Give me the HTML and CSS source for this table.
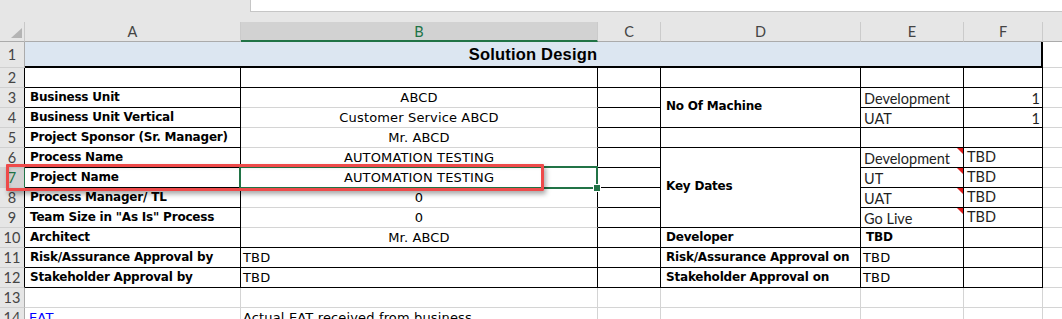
FILE: index.html
```html
<!DOCTYPE html>
<html lang="en">
<head>
<meta charset="utf-8">
<title>Solution Design</title>
<link rel="stylesheet" href="styles.css">
</head>
<body>
<div class="sheet">
  <div class="topbar"><div class="formula"></div></div>
  <table class="grid">
    <colgroup>
      <col class="c-rh"><col class="c-a"><col class="c-b"><col class="c-c"><col class="c-d"><col class="c-e"><col class="c-f"><col class="c-g">
    </colgroup>
    <thead>
      <tr>
        <th class="corner"><span class="tri"></span></th>
        <th class="col">A</th>
        <th class="col on">B</th>
        <th class="col">C</th>
        <th class="col">D</th>
        <th class="col">E</th>
        <th class="col">F</th>
        <th class="col"></th>
      </tr>
    </thead>
    <tbody>
      <tr class="r-title">
        <th class="rh">1</th>
        <td colspan="6" class="title">Solution Design</td>
        <td></td>
      </tr>
      <tr>
        <th class="rh br">2</th>
        <td class="bk"></td><td class="bk"></td><td class="bk"></td><td class="bk"></td><td class="bk"></td><td class="bk"></td><td></td>
      </tr>
      <tr>
        <th class="rh br">3</th>
        <td class="bk lbl">Business Unit</td>
        <td class="br mid">ABCD</td>
        <td class="bk"></td>
        <td class="bk lbl vm" rowspan="2">No Of Machine</td>
        <td class="bk cal">Development</td>
        <td class="bk cal num">1</td>
        <td></td>
      </tr>
      <tr>
        <th class="rh br">4</th>
        <td class="bk lbl">Business Unit Vertical</td>
        <td class="br mid">Customer Service ABCD</td>
        <td class="bk"></td>
        <td class="bk cal">UAT</td>
        <td class="bk cal num">1</td>
        <td></td>
      </tr>
      <tr>
        <th class="rh br">5</th>
        <td class="bk lbl">Project Sponsor (Sr. Manager)</td>
        <td class="br mid">Mr. ABCD</td>
        <td class="bk"></td>
        <td class="bk"></td>
        <td class="bk"></td>
        <td class="bk"></td>
        <td></td>
      </tr>
      <tr>
        <th class="rh br">6</th>
        <td class="bk lbl">Process Name</td>
        <td class="br mid">AUTOMATION TESTING</td>
        <td class="bk"></td>
        <td class="bk lbl vm" rowspan="4">Key Dates</td>
        <td class="bk cal note">Development</td>
        <td class="bk cal top">TBD</td>
        <td></td>
      </tr>
      <tr>
        <th class="rh on">7</th>
        <td class="bk lbl">Project Name</td>
        <td class="br mid cur">AUTOMATION TESTING<span class="cur-box"><span class="cur-handle"></span></span></td>
        <td class="bk"></td>
        <td class="bk cal note">UT</td>
        <td class="bk cal top">TBD</td>
        <td></td>
      </tr>
      <tr>
        <th class="rh br">8</th>
        <td class="bk lbl">Process Manager/ TL</td>
        <td class="br mid">0</td>
        <td class="bk"></td>
        <td class="bk cal note">UAT</td>
        <td class="bk cal top">TBD</td>
        <td></td>
      </tr>
      <tr>
        <th class="rh br">9</th>
        <td class="bk lbl">Team Size in "As Is" Process</td>
        <td class="br mid">0</td>
        <td class="bk"></td>
        <td class="bk cal note">Go Live</td>
        <td class="bk cal top">TBD</td>
        <td></td>
      </tr>
      <tr>
        <th class="rh br">10</th>
        <td class="bk lbl">Architect</td>
        <td class="bk mid">Mr. ABCD</td>
        <td class="bk"></td>
        <td class="bk lbl">Developer</td>
        <td class="bk lbl">TBD</td>
        <td class="bk"></td>
        <td></td>
      </tr>
      <tr>
        <th class="rh br">11</th>
        <td class="bk lbl">Risk/Assurance Approval by</td>
        <td class="bk">TBD</td>
        <td class="bk"></td>
        <td class="bk lbl">Risk/Assurance Approval on</td>
        <td class="bk">TBD</td>
        <td class="bk"></td>
        <td></td>
      </tr>
      <tr>
        <th class="rh br">12</th>
        <td class="bk lbl">Stakeholder Approval by</td>
        <td class="bk">TBD</td>
        <td class="bk"></td>
        <td class="bk lbl">Stakeholder Approval on</td>
        <td class="bk">TBD</td>
        <td class="bk"></td>
        <td></td>
      </tr>
      <tr>
        <th class="rh">13</th>
        <td></td><td></td><td></td><td></td><td></td><td></td><td></td>
      </tr>
      <tr>
        <th class="rh">14</th>
        <td class="link">EAT</td>
        <td>Actual EAT received from business</td>
        <td></td><td></td><td></td><td></td><td></td>
      </tr>
    </tbody>
  </table>
  <div class="callout"></div>
</div>
</body>
</html>
```

FILE: styles.css
```css
* {
  box-sizing: border-box;
}

html,
body {
  margin: 0;
  padding: 0;
}

body {
  width: 1062px;
  height: 319px;
  overflow: hidden;
  background: #ffffff;
  font-family: "DejaVu Sans", "Liberation Sans", sans-serif;
  color: #000000;
}

.sheet {
  position: relative;
}

/* strip above the column headings, with the edge of the formula box */
.topbar {
  height: 22px;
  background: #e6e6e6;
  display: flex;
}

.formula {
  margin-left: 250px;
  flex: 1;
  height: 12px;
  background: #ffffff;
  border-left: 1px solid #c6c6c6;
  border-bottom: 1px solid #c6c6c6;
}

/* worksheet grid */
.grid {
  border-collapse: separate;
  border-spacing: 0;
  table-layout: fixed;
  width: 1107px;
}

.c-rh { width: 25px; }
.c-a { width: 216px; }
.c-b { width: 357px; }
.c-c { width: 63px; }
.c-d { width: 200px; }
.c-e { width: 103px; }
.c-f { width: 79px; }
.c-g { width: 64px; }

.corner {
  height: 20px;
  padding: 0 2px 3px 0;
  background: #e6e6e6;
  border-right: 1px solid #c8c8c8;
  border-bottom: 1px solid #ababab;
  vertical-align: bottom;
}

.tri {
  display: block;
  width: 0;
  height: 0;
  margin-left: auto;
  border-left: 11px solid transparent;
  border-bottom: 10px solid #b4b4b4;
}

.col {
  height: 20px;
  padding: 0;
  background: #e6e6e6;
  border-right: 1px solid #cbcbcb;
  border-bottom: 1px solid #ababab;
  font-family: Lato, "Liberation Sans", sans-serif;
  font-size: 14.5px;
  font-weight: normal;
  color: #444444;
  text-align: center;
  vertical-align: middle;
}

.col.on {
  background: #d2d2d2;
  color: #217346;
  border-bottom: 2px solid #217346;
}

.rh {
  height: 20px;
  padding: 0;
  background: #e6e6e6;
  border-right: 1px solid #ababab;
  border-bottom: 1px solid #d0d0d0;
  font-family: Lato, "Liberation Sans", sans-serif;
  font-size: 14.5px;
  font-weight: normal;
  color: #444444;
  text-align: center;
  vertical-align: middle;
}

.rh.on {
  background: #d2d2d2;
  color: #217346;
  border-right-color: #217346;
}

td {
  height: 20px;
  padding: 0 2px 2px 2px;
  border-right: 1px solid #d4d4d4;
  border-bottom: 1px solid #d4d4d4;
  font-size: 13px;
  letter-spacing: 0.15px;
  line-height: 15px;
  vertical-align: bottom;
  white-space: nowrap;
  overflow: hidden;
}

.r-title td {
  height: 26px;
}

.title {
  background: #dce6f1;
  border-right: 2px solid #000000;
  border-bottom: 2px solid #000000;
  padding: 0;
  font-family: "Liberation Sans", Arial, sans-serif;
  font-size: 16.5px;
  font-weight: bold;
  letter-spacing: 0.2px;
  text-align: center;
  vertical-align: middle;
}

/* black cell borders of the form */
.br { border-right-color: #000000; }
.bb { border-bottom-color: #000000; }
.bk {
  border-right-color: #000000;
  border-bottom-color: #000000;
}

.lbl {
  padding-left: 5px;
  font-weight: bold;
  font-size: 12px;
  letter-spacing: -0.2px;
}

.mid { text-align: center; }
.num { text-align: right; }
.vm { vertical-align: middle; }
.top {
  vertical-align: top;
  padding-top: 1px;
}

.cal {
  font-family: Lato, "Liberation Sans", sans-serif;
  font-size: 14.5px;
  letter-spacing: 0;
  color: #1f1f1f;
  padding-left: 3px;
  padding-bottom: 1px;
}

.link {
  color: #0000ff;
  padding-left: 4px;
}

/* comment markers */
.note {
  position: relative;
}

.note::after {
  content: "";
  position: absolute;
  top: 0;
  right: 0;
  border-top: 6px solid #e01b1b;
  border-left: 6px solid transparent;
}

/* active cell outline with fill handle */
.cur {
  position: relative;
  overflow: visible;
}

.cur-box {
  position: absolute;
  top: -2px;
  left: -2px;
  right: -1px;
  bottom: -2px;
  border: 2px solid #217346;
}

.cur-handle {
  position: absolute;
  right: -4px;
  bottom: -4px;
  width: 6px;
  height: 6px;
  background: #217346;
  outline: 1px solid #ffffff;
}

/* red highlight frame drawn over row 7 */
.callout {
  position: absolute;
  left: 6px;
  top: 164px;
  width: 538px;
  height: 27px;
  border: 3px solid #ee4a4a;
  border-radius: 1px;
  box-shadow: 2px 3px 5px rgba(0, 0, 0, 0.35), inset 1px 1px 3px rgba(0, 0, 0, 0.12);
}
```
